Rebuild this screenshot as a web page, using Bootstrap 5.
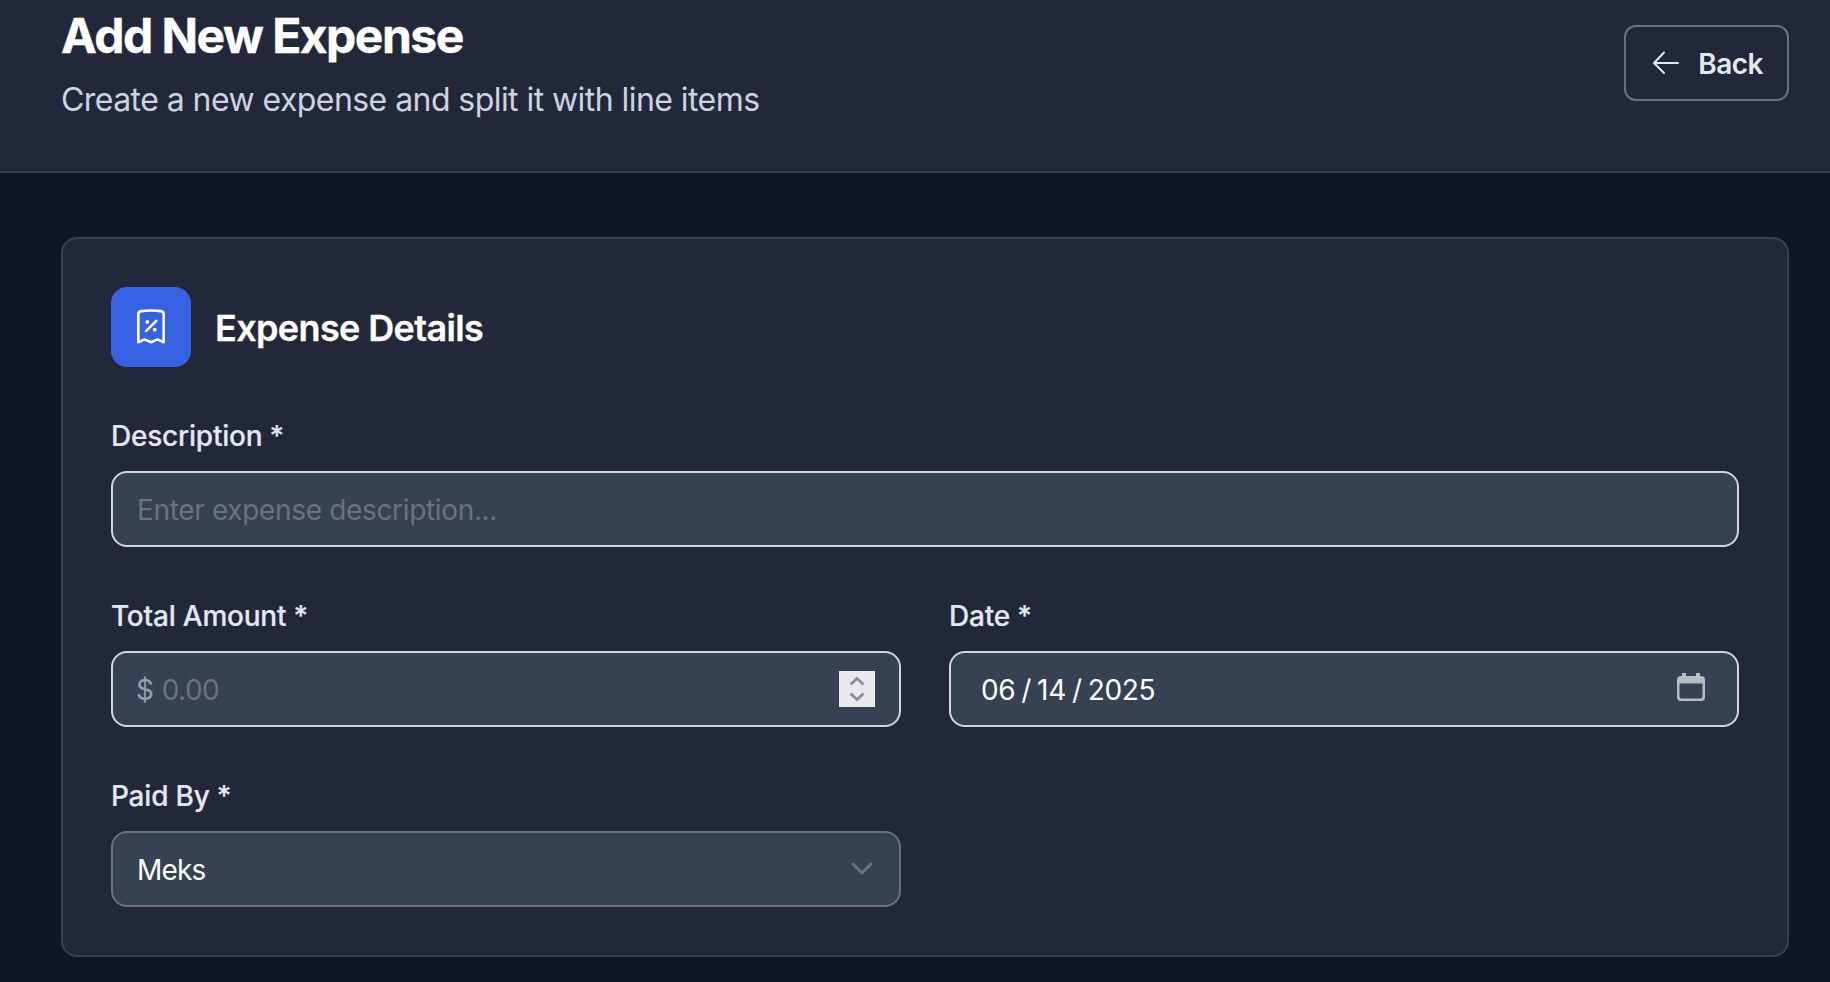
<!DOCTYPE html>
<html lang="en">
<head>
<meta charset="utf-8">
<meta name="viewport" content="width=device-width, initial-scale=1">
<title>Add New Expense</title>
<link href="https://cdn.jsdelivr.net/npm/bootstrap@5.3.0/dist/css/bootstrap.min.css" rel="stylesheet">
<style>
body{background:#0f1627;color:#fff;font-family:Inter,"Liberation Sans",sans-serif;font-size:28px;line-height:40px;overflow:hidden}
.page-head{background:#222839;border-bottom:2px solid #364152;height:173px;padding:8px 41px 0 61px}
.page-title{font-size:48px;line-height:56px;font-weight:700;letter-spacing:-1.52px;-webkit-text-stroke:.4px #fff}
.page-sub{font-size:32px;line-height:48px;color:#cbd4e1;margin-top:12px;letter-spacing:-.56px}
.btn-back{margin-top:17px;width:165px;height:76px;border:2px solid #64728a;border-radius:12px;color:#e2e7f0;font-size:28px;font-weight:600;letter-spacing:-.5px;padding:0 24px 0 26px}
.btn-back span{padding-top:2px}
.btn-back:hover{border-color:#8592a8;color:#fff}
.page-main{padding:64px 41px 0 61px}
.panel{background:#222839;border:2px solid #364152;border-radius:16px;padding:48px}
.panel-icon{width:80px;height:80px;border-radius:16px;background:#3761e3}
.panel-icon svg{margin-top:-2px}
.panel-title{font-size:36px;line-height:56px;font-weight:600;letter-spacing:-.63px;padding-top:2px;-webkit-text-stroke:.3px #fff}
.fields{--bs-gutter-x:48px;--bs-gutter-y:48px}
.form-label{color:#e2e7f0;font-weight:500;line-height:38px;padding-top:2px;margin-bottom:16px;letter-spacing:-.22px;-webkit-text-stroke:.2px #e2e7f0}
.field,.field:focus{background:#364153;border:2px solid #d4d5da;border-radius:16px;height:76px;color:#fff;font-size:28px;line-height:40px;letter-spacing:-.34px;padding:1px 24px 0}
.field::placeholder{color:#6c7080;opacity:1}
.field-muted{border-color:#6c7080}
.field input{background:none;border:0;outline:0;color:#fff;letter-spacing:-.5px;min-width:0;padding:0}
.field input::placeholder{color:#6c7080;opacity:1}
.amount-field{padding-left:23px}
.currency{color:#94a1b6}
.stepper{width:36px;height:36px;background:#e9e9eb;margin-top:-1px}
.date-field{padding:1px 32px 0 30px}
.date-value .sep{margin:0 6px}
.cal{margin-top:-5px}
.payer{letter-spacing:-.8px}
.chevron{margin:-1px 1px 0 0}
</style>
</head>
<body>
<header class="page-head d-flex justify-content-between align-items-start">
  <div>
    <h1 class="page-title mb-0">Add New Expense</h1>
    <p class="page-sub mb-0">Create a new expense and split it with line items</p>
  </div>
  <button type="button" class="btn btn-back d-flex align-items-center justify-content-between">
    <svg width="28" height="28" viewBox="0 0 28 28" fill="none" stroke="currentColor" stroke-width="2" stroke-linecap="round" stroke-linejoin="round"><path d="M12 3.5 2 14l10 10M2 14h24"/></svg>
    <span>Back</span>
  </button>
</header>
<main class="page-main">
  <section class="panel">
    <div class="d-flex align-items-center gap-4 mb-5">
      <div class="panel-icon d-flex align-items-center justify-content-center flex-shrink-0">
        <svg width="40" height="40" viewBox="0 0 40 40" fill="none" stroke="#fff" stroke-width="2.6" stroke-linecap="round" stroke-linejoin="round"><path d="M7.3 36.2V8.2q0-2.7 2.7-3.1 10-1.3 20 0 2.7.4 2.7 3.1v28L26.5 33.4 20 36.2 13.5 33.400ZM15 25.2 25.3 14.9"/><circle cx="16.3" cy="16" r="1.9" fill="#fff" stroke="none"/><circle cx="23.7" cy="23.7" r="1.9" fill="#fff" stroke="none"/></svg>
      </div>
      <h2 class="panel-title mb-0">Expense Details</h2>
    </div>
    <form class="row fields">
      <div class="col-12">
        <label class="form-label d-block" for="desc">Description *</label>
        <input id="desc" type="text" class="form-control field" placeholder="Enter expense description...">
      </div>
      <div class="col-6">
        <label class="form-label d-block" for="amount">Total Amount *</label>
        <div class="form-control field amount-field d-flex align-items-center gap-2">
          <span class="currency">$</span>
          <input id="amount" class="flex-grow-1" type="text" inputmode="decimal" placeholder="0.00">
          <span class="stepper d-flex align-items-center justify-content-center">
            <svg width="36" height="36" viewBox="0 0 36 36" fill="none" stroke="#8c8d9a" stroke-width="2.8"><path d="m11.5 13.5 6.5-6 6.5 6M11.5 22.5l6.5 6 6.5-6"/></svg>
          </span>
        </div>
      </div>
      <div class="col-6">
        <label class="form-label d-block">Date *</label>
        <div class="form-control field date-field d-flex align-items-center justify-content-between">
          <span class="date-value d-flex"><span>06</span><span class="sep">/</span><span>14</span><span class="sep">/</span><span>2025</span></span>
          <svg class="cal" width="28" height="28" viewBox="0 0 28 28" fill="#b8bcc5"><path fill-rule="evenodd" d="M5 0h4v3h10V0h4v3h1a4 4 0 0 1 4 4v17a4 4 0 0 1-4 4H4a4 4 0 0 1-4-4V7a4 4 0 0 1 4-4h1ZM2.500 10.500v13a2 2 0 0 0 2 2h19a2 2 0 0 0 2-2v-13Z"/></svg>
        </div>
      </div>
      <div class="col-6">
        <label class="form-label d-block">Paid By *</label>
        <div class="form-control field field-muted d-flex align-items-center justify-content-between" role="combobox">
          <span class="payer">Meks</span>
          <svg class="chevron" width="24" height="24" viewBox="0 0 24 24" fill="none" stroke="#6c7080" stroke-width="3" stroke-linecap="round" stroke-linejoin="round"><path d="m3 7 9 9 9-9"/></svg>
        </div>
      </div>
    </form>
  </section>
</main>
<script src="https://cdn.jsdelivr.net/npm/bootstrap@5.3.0/dist/js/bootstrap.bundle.min.js"></script>
</body>
</html>
